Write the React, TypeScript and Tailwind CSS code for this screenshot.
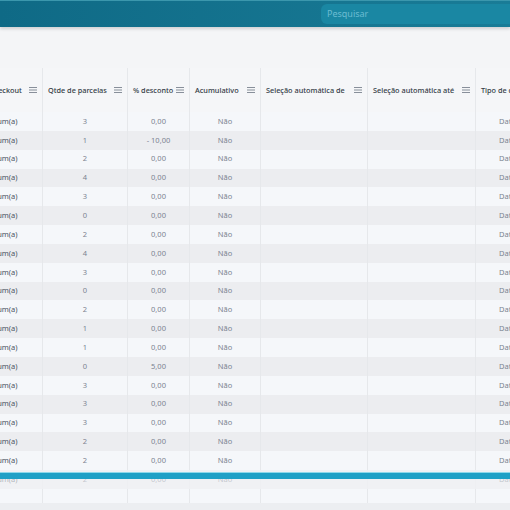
import React from 'react'

const font = { fontFamily: '"Noto Sans", "Open Sans", sans-serif' }

const columns = [
  { label: 'No checkout', w: 'w-[70px]', align: 'justify-start pl-[5px]' },
  { label: 'Qtde de parcelas', w: 'w-[85px]', align: 'justify-center' },
  { label: '% desconto', w: 'w-[62px]', align: 'justify-center' },
  { label: 'Acumulativo', w: 'w-[71px]', align: 'justify-center' },
  { label: 'Seleção automática de', w: 'w-[107px]', align: 'justify-center' },
  { label: 'Seleção automática até', w: 'w-[108px]', align: 'justify-center' },
  { label: 'Tipo de desconto', w: 'w-[90px]', align: 'justify-start pl-[23px]' },
]

const parcelas = [3, 1, 2, 4, 3, 0, 2, 4, 3, 0, 2, 1, 1, 0, 3, 3, 3, 2, 2, 2]
const descontos = parcelas.map((_, i) => (i === 1 ? '- 10,00' : i === 13 ? '5,00' : '0,00'))

function MenuIcon() {
  return (
    <svg width="8" height="6" viewBox="0 0 8 6" className="shrink-0 text-[#7c838e]">
      <path d="M0 0.5h8M0 3h8M0 5.5h8" stroke="currentColor" strokeWidth="0.9" />
    </svg>
  )
}

export default function App() {
  return (
    <div className="relative w-[510px] h-[510px] overflow-hidden bg-[#f4f5f7]" style={font}>
      <div className="h-[27px] bg-gradient-to-r from-[#0f6a86] to-[#197c97] border-t border-[#3b97ad] shadow-[0_2px_3px_rgba(0,0,0,0.15)] flex items-center justify-end relative z-10">
        <div className="w-[195px] -mr-[6px] h-[20px] rounded-md bg-[#1a87a3] flex items-center pl-[6px]">
          <span className="text-[9px] text-[#6cbcd1]">Pesquisar</span>
        </div>
      </div>

      <div className="h-[41px]" />

      <div className="-ml-[27px] flex flex-col">
        <div className="flex h-[44px] bg-[#f5f6f8]">
          {columns.map((c) => (
            <div
              key={c.label}
              className={`${c.w} shrink-0 border-r border-[#e6e8eb] flex items-center justify-between gap-[3px] pl-[5px] pr-[5px] text-[7.3px] font-medium text-[#333b45] whitespace-nowrap overflow-hidden`}
            >
              <span>{c.label}</span>
              <MenuIcon />
            </div>
          ))}
        </div>

        {parcelas.map((p, i) => {
          const faded = i === parcelas.length - 1
          const values = ['Nenhum(a)', String(p), descontos[i], 'Não', '', '', 'Data']
          return (
            <div
              key={i}
              className={`flex h-[18.85px] ${i % 2 === 0 ? 'bg-[#f5f7fa]' : 'bg-[#ecedf0]'} ${faded ? 'opacity-40' : ''}`}
            >
              {columns.map((c, j) => (
                <div
                  key={j}
                  className={`${c.w} shrink-0 border-r border-[#e6e8eb] flex items-center ${c.align} text-[7.5px] whitespace-nowrap overflow-hidden ${j === 0 ? 'text-[#4b5563]' : 'text-[#7b8390]'}`}
                >
                  {values[j]}
                </div>
              ))}
            </div>
          )
        })}

        <div className="flex h-[14px] bg-[#f5f7fa]">
          {columns.map((c, j) => (
            <div key={j} className={`${c.w} shrink-0 border-r border-[#e6e8eb]`} />
          ))}
        </div>
        <div className="h-[10px] bg-[#eceef1]" />
      </div>

      <div className="absolute left-0 right-0 top-[472px] h-[7px] bg-[#1fa0c6] border-t border-[#8fd8ea]" />
    </div>
  )
}
